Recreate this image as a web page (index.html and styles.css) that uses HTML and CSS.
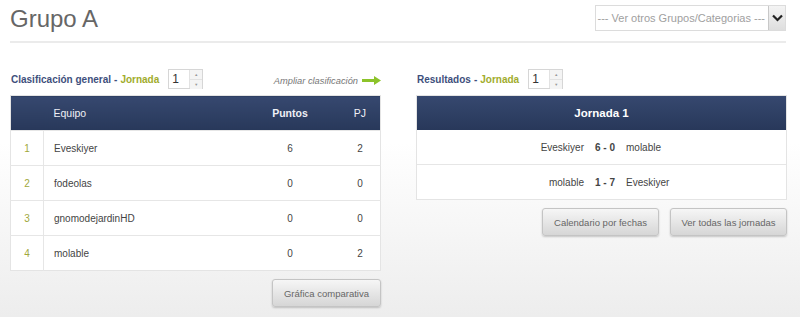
FILE: index.html
```html
<!DOCTYPE html>
<html>
<head>
<meta charset="UTF-8">
<meta name="viewport" content="width=device-width, initial-scale=1.0">
<title>Grupo A</title>
<link rel="stylesheet" href="styles.css">
</head>
<body>

<div class="page">
    <div class="top">
        <h1 class="group-title">Grupo A</h1>
        <div class="select-box">
            <span class="select-text">--- Ver otros Grupos/Categorias ---</span>
            <span class="select-arrow">
                <svg width="11" height="8" viewBox="0 0 11 8"><path d="M1 1.5 L5.5 6 L10 1.5" fill="none" stroke="#222" stroke-width="2.2"/></svg>
            </span>
        </div>
    </div>

    <div class="columns">
        <div class="col col-left">
            <div class="bar">
                <div class="bar-label">
                    <span class="label-main">Clasificación general</span> - <span class="label-green">Jornada</span>
                    <span class="spinner"><span class="spinner-val">1</span><span class="spinner-btns"><span>&#9650;</span><span>&#9660;</span></span></span>
                </div>
                <a href="#" class="more-link">Ampliar clasificación
                    <svg width="19" height="9" viewBox="0 0 19 9"><path d="M0 3 H12 V0 L19 4.5 L12 9 V6 H0 Z" fill="#8cc32a"/></svg>
                </a>
            </div>

            <table class="standings">
                <thead>
                    <tr>
                        <th class="c-pos"></th>
                        <th class="c-team">Equipo</th>
                        <th class="c-pts">Puntos</th>
                        <th class="c-pj">PJ</th>
                    </tr>
                </thead>
                <tbody>
                    <tr><td class="c-pos">1</td><td class="c-team">Eveskiyer</td><td class="c-pts">6</td><td class="c-pj">2</td></tr>
                    <tr><td class="c-pos">2</td><td class="c-team">fodeolas</td><td class="c-pts">0</td><td class="c-pj">0</td></tr>
                    <tr><td class="c-pos">3</td><td class="c-team">gnomodejardinHD</td><td class="c-pts">0</td><td class="c-pj">0</td></tr>
                    <tr><td class="c-pos">4</td><td class="c-team">molable</td><td class="c-pts">0</td><td class="c-pj">2</td></tr>
                </tbody>
            </table>

            <div class="button-row">
                <a href="#" class="button button-wide">Gráfica comparativa</a>
            </div>
        </div>

        <div class="col col-right">
            <div class="bar">
                <div class="bar-label">
                    <span class="label-main">Resultados</span> - <span class="label-green">Jornada</span>
                    <span class="spinner"><span class="spinner-val">1</span><span class="spinner-btns"><span>&#9650;</span><span>&#9660;</span></span></span>
                </div>
            </div>

            <div class="results">
                <div class="results-head">Jornada 1</div>
                <div class="match">
                    <span class="home">Eveskiyer</span>
                    <span class="score">6 - 0</span>
                    <span class="away">molable</span>
                </div>
                <div class="match">
                    <span class="home">molable</span>
                    <span class="score">1 - 7</span>
                    <span class="away">Eveskiyer</span>
                </div>
            </div>

            <div class="button-row">
                <a href="#" class="button">Calendario por fechas</a>
                <a href="#" class="button">Ver todas las jornadas</a>
            </div>
        </div>
    </div>
</div>

</body>
</html>
```

FILE: styles.css
```css
body, html {
    margin: 0;
    padding: 0;
    font-family: "Liberation Sans", Arial, sans-serif;
    color: #444;
    height: 100%;
}

body {
    background: linear-gradient(#ffffff 0%, #ffffff 45%, #ededed 100%);
}

.page {
    padding: 0 14px 0 10px;
}

.top {
    display: flex;
    justify-content: space-between;
    align-items: center;
    height: 41px;
    border-bottom: 2px solid #ebebeb;
}

.group-title {
    margin: 0;
    font-size: 24px;
    font-weight: normal;
    color: #666;
    padding-bottom: 4px;
}

.select-box {
    display: flex;
    align-items: stretch;
    height: 24px;
    border: 1px solid #dcdcdc;
    background-color: #fff;
    margin-bottom: 6px;
}

.select-text {
    display: flex;
    align-items: center;
    padding: 0 3px 0 2px;
    font-size: 11px;
    color: #a0a0a0;
}

.select-arrow {
    display: flex;
    align-items: center;
    justify-content: center;
    width: 16px;
    background: linear-gradient(#f4f4f4, #dedede);
    border-left: 1px solid #c8c8c8;
}

.columns {
    display: flex;
    gap: 35px;
    margin-top: 26px;
}

.col-left {
    width: 371px;
}

.col-right {
    width: 371px;
}

.bar {
    display: flex;
    justify-content: space-between;
    align-items: center;
    height: 20px;
    margin-bottom: 6px;
}

.bar-label {
    display: flex;
    align-items: center;
    font-size: 10px;
    font-weight: bold;
    color: #3e4f7c;
}

.label-main {
    margin-right: 3px;
    margin-left: 1px;
}

.label-green {
    color: #a1ac2c;
    margin-left: 3px;
}

.spinner {
    display: flex;
    margin-left: 9px;
    width: 33px;
    height: 18px;
    border: 1px solid #d6d6d6;
    background-color: #fff;
}

.spinner-val {
    flex: 1;
    font-weight: normal;
    font-size: 12px;
    color: #333;
    padding-left: 3px;
    line-height: 18px;
}

.spinner-btns {
    display: flex;
    flex-direction: column;
    width: 12px;
    border-left: 1px solid #e2e2e2;
}

.spinner-btns span {
    flex: 1;
    font-size: 4px;
    color: #999;
    text-align: center;
    line-height: 9px;
    background-color: #f4f4f4;
}

.spinner-btns span + span {
    border-top: 1px solid #e2e2e2;
}

.more-link {
    display: flex;
    align-items: center;
    gap: 4px;
    font-size: 9.3px;
    font-style: italic;
    color: #777;
    text-decoration: none;
    margin-top: 3px;
}

.standings {
    width: 371px;
    border-collapse: collapse;
    font-size: 10px;
    background-color: #fff;
    border: 1px solid #e4e4e4;
}

.standings th,
.standings td {
    padding: 0;
}

.standings th {
    height: 34px;
    background: linear-gradient(#36486f, #28385a);
    color: #eef0f6;
    font-size: 10.5px;
    font-weight: normal;
    text-align: left;
}

.standings td {
    height: 34px;
    border-top: 1px solid #e6e6e6;
    color: #444;
}

.c-pos {
    width: 32px;
    text-align: center;
}

.standings td.c-pos {
    color: #a0a83c;
    border-right: 1px solid #e6e6e6;
}

.c-team {
    padding-left: 10px !important;
}

.standings .c-pts {
    width: 100px;
    text-align: center;
}

.standings th.c-pts {
    font-weight: bold;
}

.standings .c-pj {
    width: 40px;
    text-align: center;
}

.button-row {
    display: flex;
    justify-content: flex-end;
    gap: 11px;
    margin-top: 8px;
}

.button {
    display: flex;
    align-items: center;
    justify-content: center;
    width: 115px;
    height: 26px;
    font-size: 9.5px;
    color: #666;
    text-decoration: none;
    background: linear-gradient(#f6f6f6, #d6d6d6);
    border: 1px solid #c4c4c4;
    border-radius: 3px;
    box-shadow: 0 1px 2px rgba(0, 0, 0, 0.2);
}

.button-wide {
    width: 107px;
}

.results {
    width: 369px;
    border: 1px solid #e4e4e4;
    background-color: #fff;
    font-size: 10px;
}

.results-head {
    height: 34px;
    line-height: 34px;
    text-align: center;
    font-weight: bold;
    font-size: 11.5px;
    color: #fff;
    background: linear-gradient(#36486f, #28385a);
}

.match {
    display: grid;
    grid-template-columns: 1fr auto 1fr;
    column-gap: 11px;
    align-items: center;
    height: 34px;
    border-top: 1px solid #e6e6e6;
    padding-left: 7px;
    color: #444;
}

.results-head + .match {
    border-top: none;
}

.home {
    text-align: right;
}

.score {
    font-weight: bold;
}

.away {
    text-align: left;
}
```
